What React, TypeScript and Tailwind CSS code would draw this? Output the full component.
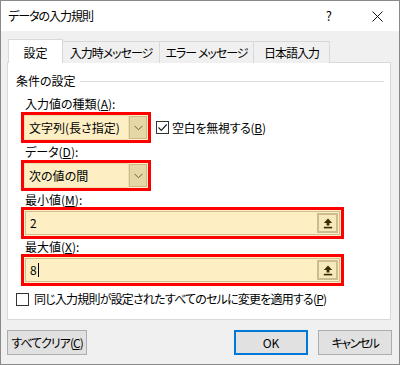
import React from 'react';

const font = "font-['Noto_Sans_CJK_JP','Noto_Sans',sans-serif] [font-feature-settings:'palt']";

function Ul({ k }: { k: string }) {
  return (
    <>
      (<span className="underline underline-offset-[1px]">{k}</span>)
    </>
  );
}

function Chevron() {
  return (
    <svg width="9" height="6" viewBox="0 0 9 6">
      <path d="M0.5 0.8 L4.5 4.8 L8.5 0.8" fill="none" stroke="#6f6140" strokeWidth="1" />
    </svg>
  );
}

function UpArrow() {
  return (
    <svg width="10" height="11" viewBox="0 0 10 11">
      <path d="M5 0.5 L0.8 5 L3.6 5 L3.6 7.5 L6.4 7.5 L6.4 5 L9.2 5 Z" fill="#3b2b00" />
      <rect x="0.8" y="8.8" width="8.4" height="1.6" fill="#3b2b00" />
    </svg>
  );
}

function Combo({ value }: { value: string }) {
  return (
    <div className="flex h-[31px] w-[130px] border-[3px] border-[#ff0000] bg-[#fdefc3]">
      <div className="flex flex-1 items-center border border-[#efe0ae] pl-[4px] text-[12px]">{value}</div>
      <div className="my-px mr-px flex w-[18px] items-center justify-center border border-[#cbbb8b] bg-[#e6d7a7]">
        <Chevron />
      </div>
    </div>
  );
}

function Field({ value, caret }: { value: string; caret?: boolean }) {
  return (
    <div className="h-[32px] w-[323px] border-[3px] border-[#ff0000] bg-[#fdefc3] p-px">
      <div className="flex h-full items-center border border-[#cfbf90] bg-[#fdefc3] pr-px pl-[4px]">
        <span className="flex flex-1 items-center text-[12px]">
          {value}
          {caret && <span className="ml-px inline-block h-[14px] w-px bg-black" />}
        </span>
        <div className="flex h-[20px] w-[21px] items-center justify-center border-2 border-[#cdbd8e] bg-[#f7e9bb]">
          <UpArrow />
        </div>
      </div>
    </div>
  );
}

function CheckBox({ checked }: { checked?: boolean }) {
  return (
    <div className="flex h-[13px] w-[13px] items-center justify-center border border-[#333333] bg-white">
      {checked && (
        <svg width="11" height="11" viewBox="0 0 11 11">
          <path d="M1.5 5.5 L4.3 8.3 L9.7 2.5" fill="none" stroke="#222222" strokeWidth="1.2" />
        </svg>
      )}
    </div>
  );
}

export default function App() {
  const tabs = [
    { label: '入力時メッセージ', w: 'w-[98px]' },
    { label: 'エラー メッセージ', w: 'w-[95px]' },
    { label: '日本語入力', w: 'w-[77px]' },
  ];

  return (
    <div className={`flex h-[365px] w-[400px] flex-col border border-[#8a8a8a] bg-[#f0f0f0] text-black ${font}`}>
      <div className="flex h-[30px] items-center bg-white pl-[7px] text-[12px]">
        <span className="flex-1 tracking-[-1px]">データの入力規則</span>
        <span className="mr-[40px] text-[13px]">?</span>
        <svg width="11" height="11" viewBox="0 0 11 11" className="mr-[16px]">
          <path d="M0.5 0.5 L10.5 10.5 M10.5 0.5 L0.5 10.5" stroke="#111111" strokeWidth="1" />
        </svg>
      </div>

      <div className="flex flex-col pt-[8px] pl-[6px]">
        <div className="relative z-10 -mb-px flex h-[24px] items-end pl-[1px] text-[12px]">
          <div className="flex h-[24px] w-[55px] items-center justify-center border border-b-0 border-[#d9d9d9] bg-white pt-[2px]">
            設定
          </div>
          {tabs.map((t) => (
            <div
              key={t.label}
              className={`-ml-px flex h-[22px] ${t.w} items-center justify-center whitespace-pre border border-b-0 border-[#d9d9d9] bg-[#f0f0f0] tracking-[-1px]`}
            >
              {t.label}
            </div>
          ))}
        </div>

        <div className="flex h-[258px] w-[384px] flex-col border border-[#d9d9d9] bg-white pl-[8px] text-[12px]">
          <div className="mt-[11px] flex h-[14px] items-center leading-[14px]">
            <span>条件の設定</span>
            <div className="ml-[4px] mr-[6px] h-px flex-1 bg-[#dcdcdc]" />
          </div>

          <div className="ml-[5px] flex flex-col">
            <div className="mt-[9px] h-[14px] pl-[4px] leading-[14px]">
              入力値の種類<Ul k="A" />:
            </div>
            <div className="mt-px flex items-center">
              <Combo value="文字列(長さ指定)" />
              <div className="ml-[5px] flex items-center gap-[3px]">
                <CheckBox checked />
                <span className="tracking-[-0.3px]">
                  空白を無視する<Ul k="B" />
                </span>
              </div>
            </div>

            <div className="mt-[2px] h-[14px] pl-[4px] leading-[14px]">
              データ<Ul k="D" />:
            </div>
            <div className="mt-px">
              <Combo value="次の値の間" />
            </div>

            <div className="mt-[2px] h-[14px] pl-[4px] leading-[14px]">
              最小値<Ul k="M" />:
            </div>
            <Field value="2" />

            <div className="mt-px h-[14px] pl-[4px] leading-[14px]">
              最大値<Ul k="X" />:
            </div>
            <Field value="8" caret />
          </div>

          <div className="mt-[6px] flex items-center gap-[5px]">
            <CheckBox />
            <span className="leading-[14px] tracking-[-0.8px]">
              同じ入力規則が設定されたすべてのセルに変更を適用する<Ul k="P" />
            </span>
          </div>
        </div>

        <div className="mt-[10px] flex h-[25px] items-stretch text-[12px]">
          <div className="flex w-[80px] items-center justify-center whitespace-nowrap border border-[#adadad] bg-[#e1e1e1] tracking-[-1px]">
            すべてクリア<Ul k="C" />
          </div>
          <div className="ml-[147px] flex w-[74px] items-center justify-center border-2 border-[#0078d7] bg-[#e1e1e1]">
            OK
          </div>
          <div className="ml-[10px] flex w-[74px] items-center justify-center border border-[#adadad] bg-[#e1e1e1] tracking-[-1.5px]">
            キャンセル
          </div>
        </div>
      </div>
    </div>
  );
}
